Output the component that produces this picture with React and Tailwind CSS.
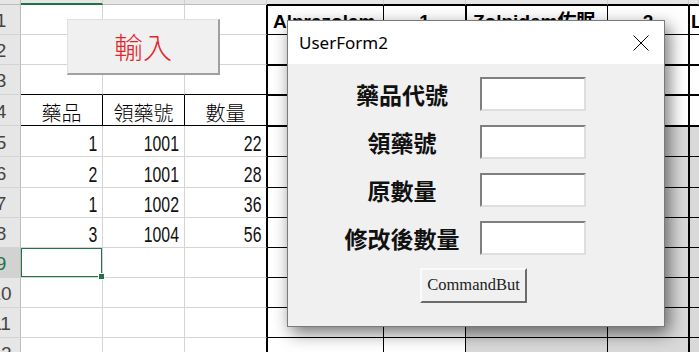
import React from "react";

const CJK = "font-['Noto_Sans_CJK_TC','Noto_Sans_CJK_SC',sans-serif]";

function cellCls(r, c) {
  const cls = ["relative overflow-hidden flex"];
  if (c === 0) cls.push("border-r border-r-[#bdbdbd]");
  else if (r === 0) cls.push("border-r border-r-[#d0d0d0]");
  else if (c === 1 || c === 2) cls.push(r === 4 ? "border-r border-r-black" : "border-r border-r-[#d4d4d4]");
  else if (c >= 3 && c <= 7) cls.push("border-r border-r-black");
  if (r >= 1 && (c === 4 || c === 8)) cls.push("border-l border-l-black");
  if (r >= 1 && r <= 4 && c === 6) cls.push("border-l border-l-black");
  if (r === 0) {
    if (c === 1) cls.push("border-b-2 border-b-[#217346]");
    else if (c >= 4) cls.push("border-b border-b-black");
    else cls.push("border-b border-b-[#bdbdbd]");
  } else if (c === 0) cls.push("border-b border-b-[#d4d4d4]");
  else if (c <= 3) cls.push(r === 3 || r === 4 ? "border-b border-b-black" : "border-b border-b-[#d4d4d4]");
  else cls.push("border-b border-b-black");
  if (c >= 4 && (r === 1 || r === 3 || r === 4 || r === 5)) cls.push("border-t border-t-black");
  if (c === 0 && r === 9) cls.push("bg-[#d2d2d2]");
  else if (r === 0 || c === 0) cls.push("bg-[#e6e6e6]");
  else if (c >= 6 && r >= 5) cls.push("bg-[#d9d9d9]");
  else cls.push("bg-white");
  return cls.join(" ");
}

const heads = { "4-1": "藥品", "4-2": "領藥號", "4-3": "數量" };
const nums = {
  "5-1": "1", "5-2": "1001", "5-3": "22",
  "6-1": "2", "6-2": "1001", "6-3": "28",
  "7-1": "1", "7-2": "1002", "7-3": "36",
  "8-1": "3", "8-2": "1004", "8-3": "56",
};

function CellContent({ r, c }) {
  const k = `${r}-${c}`;
  if (c === 0 && r > 0) {
    return (
      <div className="w-[40px] -ml-[18px] flex items-center justify-center pt-[2px]">
        <span className={`font-['Liberation_Sans',sans-serif] text-[19px] leading-none ${r === 9 ? "text-[#217346]" : "text-[#444]"}`}>{r}</span>
      </div>
    );
  }
  if (heads[k]) {
    return (
      <div className="w-full flex items-end justify-center pb-[2px]">
        <span className={`${CJK} font-light text-[20px] leading-none text-black`}>{heads[k]}</span>
      </div>
    );
  }
  if (nums[k]) {
    return (
      <div className="w-full flex items-end justify-end pr-[5px] pb-[1px]">
        <span className="inline-block origin-right scale-x-[0.72] font-['Liberation_Sans',sans-serif] text-[22px] leading-none text-[#111]">{nums[k]}</span>
      </div>
    );
  }
  if (k === "1-4") {
    return (
      <div className="w-full flex items-end pl-[5px] pb-[3px]">
        <span className="font-['Liberation_Sans',sans-serif] font-bold text-[19px] leading-none text-black">Alprazolam</span>
      </div>
    );
  }
  if (k === "1-5") {
    return (
      <div className="w-full flex items-end justify-center pb-[3px]">
        <span className="font-['Liberation_Sans',sans-serif] font-bold text-[19px] leading-none text-black">1</span>
      </div>
    );
  }
  if (k === "1-6") {
    return (
      <div className="w-full flex items-end pl-[6px] pb-[3px]">
        <span className="font-['Liberation_Sans','Noto_Sans_CJK_TC',sans-serif] font-bold text-[19px] leading-none text-black">Zolpidem佐眠</span>
      </div>
    );
  }
  if (k === "1-7") {
    return (
      <div className="w-full flex items-end justify-center pb-[3px]">
        <span className="font-['Liberation_Sans',sans-serif] font-bold text-[19px] leading-none text-black">2</span>
      </div>
    );
  }
  if (k === "1-8") {
    return (
      <div className="w-full flex items-end pl-[1px] pb-[3px]">
        <span className="font-['Liberation_Sans',sans-serif] font-bold text-[19px] leading-none text-black">L</span>
      </div>
    );
  }
  if (k === "9-1") {
    return <div className="absolute -top-[1px] -left-[1px] -right-[1px] -bottom-[1px] border-2 border-[#217346]" />;
  }
  return null;
}

function TextBox() {
  return (
    <div className="w-[106px] h-[34px] bg-white border-2 border-t-[#7f7f7f] border-l-[#7f7f7f] border-b-[#dedede] border-r-[#dedede]" />
  );
}

function Label({ children }) {
  return (
    <div className="h-[34px] flex items-center justify-center">
      <span className={`${CJK} font-bold text-[23px] leading-none text-[#111]`}>{children}</span>
    </div>
  );
}

export default function App() {
  const rows = Array.from({ length: 13 }, (_, i) => i);
  const cols = Array.from({ length: 9 }, (_, i) => i);
  return (
    <div className="relative w-[699px] h-[352px] overflow-hidden bg-white">
      <div className="grid grid-cols-[21px_82px_82px_82px_117px_82px_142px_81px_1fr] grid-rows-[5px_30px_30px_30px_31px_31px_31px_30px_30px_30px_30px_30px_30px]">
        {rows.map((r) =>
          cols.map((c) => (
            <div key={`${r}-${c}`} className={cellCls(r, c)}>
              <CellContent r={r} c={c} />
            </div>
          ))
        )}
      </div>

      <div className="absolute left-[98px] top-[273px] w-[7px] h-[7px] bg-[#217346] border border-white" />

      <div className="absolute left-[67px] top-[19px] w-[153px] h-[56px] bg-[#f0f0f0] border-t border-l border-t-[#e0e0e0] border-l-[#e0e0e0] border-r-2 border-b-2 border-r-[#a0a0a0] border-b-[#a0a0a0] flex items-center justify-center">
        <span className={`${CJK} font-light text-[29px] leading-none text-[#e3262b]`}>輸入</span>
      </div>

      <div className="absolute left-[287px] top-[20px] w-[378px] h-[307px] border border-[#7a7a7a] bg-[#f0f0f0] shadow-[4px_6px_16px_rgba(0,0,0,0.55)] flex flex-col">
        <div className="h-[43px] bg-white flex items-center justify-between pl-[11px] pr-[15px]">
          <span className="font-['Noto_Sans',sans-serif] text-[17px] text-black">UserForm2</span>
          <svg width="16" height="16" viewBox="0 0 16 16">
            <path d="M0.5 0.5L15.5 15.5M15.5 0.5L0.5 15.5" stroke="#000" strokeWidth="1" />
          </svg>
        </div>
        <div className="flex-1 pt-[13px]">
          <div className="grid grid-cols-[124px_106px] gap-x-[16px] gap-y-[14px] pl-[52px]">
            <Label>藥品代號</Label>
            <TextBox />
            <Label>領藥號</Label>
            <TextBox />
            <Label>原數量</Label>
            <TextBox />
            <Label>修改後數量</Label>
            <TextBox />
          </div>
          <div className="pl-[132px] pt-[13px]">
            <div className="w-[107px] h-[35px] bg-[#f0f0f0] border-t-2 border-l-2 border-t-[#fbfbfb] border-l-[#fbfbfb] border-r-2 border-b-2 border-r-[#6b6b6b] border-b-[#6b6b6b] flex items-center justify-center">
              <span className="font-['Liberation_Serif',serif] text-[16.5px] leading-none text-[#222]">CommandBut</span>
            </div>
          </div>
        </div>
      </div>
    </div>
  );
}
